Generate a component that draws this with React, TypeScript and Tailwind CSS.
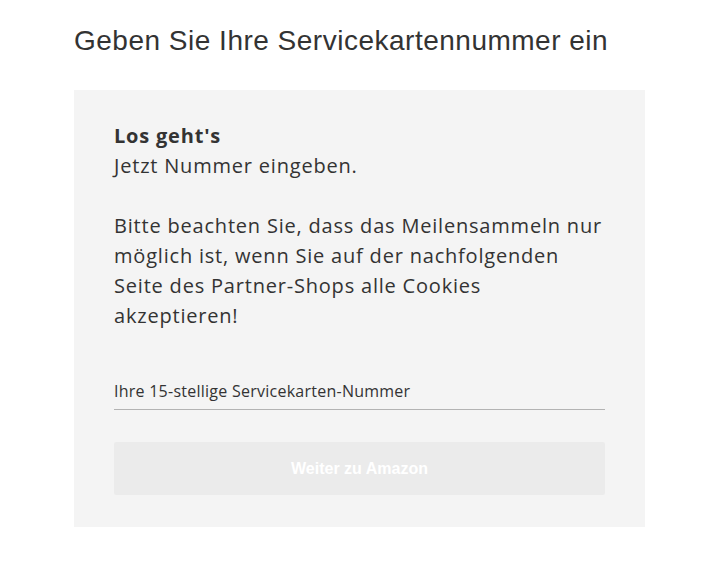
import React from 'react';

export default function App() {
  return (
    <div className="min-h-screen bg-white text-[#333333]">
      <div className="pl-[74px] pr-[69px] pt-[23px]">
        <h1 className="text-[28px] leading-[36px] tracking-[0.5px] text-[#333333] font-['Liberation_Sans',sans-serif]">
          Geben Sie Ihre Servicekartennummer ein
        </h1>

        <div className="mt-[31px] w-[571px] bg-[#f4f4f4] px-[40px] pt-[31px] pb-[32px] font-['Open_Sans',sans-serif] tracking-[0.8px]">
          <p className="text-[20px] leading-[30px] font-bold">Los geht's</p>
          <p className="text-[20px] leading-[30px]">Jetzt Nummer eingeben.</p>
          <p className="mt-[30px] text-[20px] leading-[30px]">
            Bitte beachten Sie, dass das Meilensammeln nur
            <br />
            möglich ist, wenn Sie auf der nachfolgenden
            <br />
            Seite des Partner-Shops alle Cookies
            <br />
            akzeptieren!
          </p>

          <label className="mt-[50px] block border-b border-[#b3b3b3] pb-[8px] text-[16px] leading-[20px] tracking-[0.25px]">
            Ihre 15-stellige Servicekarten-Nummer
          </label>

          <button
            type="button"
            disabled
            className="mt-[32px] flex h-[53px] w-full items-center justify-center rounded-[2px] bg-[#ebebeb] font-['Liberation_Sans',sans-serif] text-[16px] font-bold tracking-[0px] text-white"
          >
            Weiter zu Amazon
          </button>
        </div>
      </div>
    </div>
  );
}
